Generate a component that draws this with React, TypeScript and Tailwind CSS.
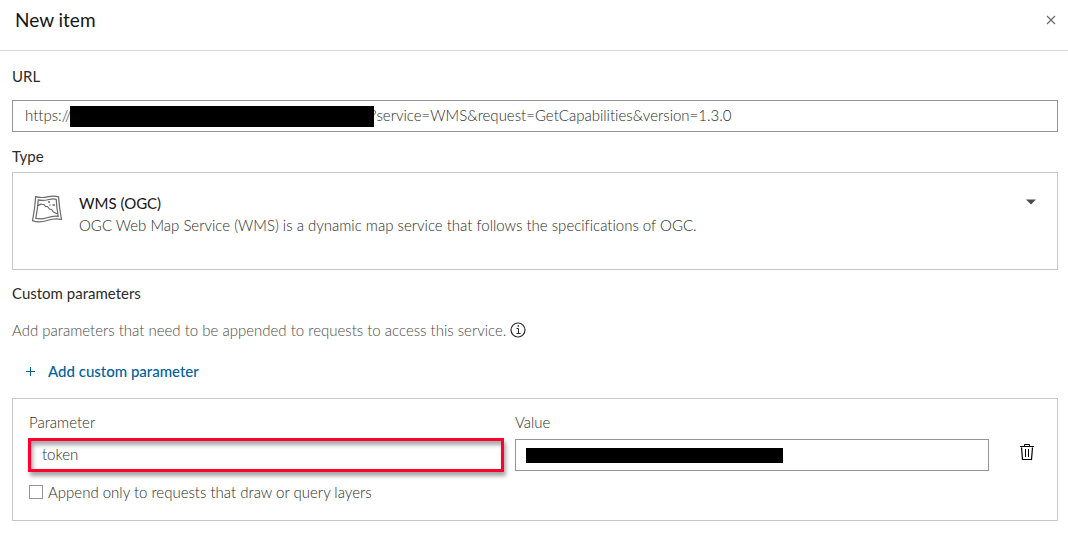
import React, { useState } from 'react';

const MapIcon = () => (
  <svg width="32" height="30" viewBox="0 0 32 30" fill="none" stroke="#6a6a6a" strokeWidth="1.2" className="mt-px shrink-0" aria-hidden="true">
    <path d="M4.600 2.700 C9 4 13.500 3.600 17.500 2.600 C21 1.900 24.500 1.900 27.600 2.900 C28 10 29 18 30.500 25.500 C26 24.300 22 24.500 17 26.300 C12 28 6 28.400 1.500 26.600 C3 18.500 4.200 10 4.600 2.700 Z" />
    <path d="M7.300 5.900 C11 6.800 14.500 6.400 18 5.500 C20.500 4.900 23 4.800 25.200 5.300 C25.500 11 26.200 17 27.200 22.300 C23.500 21.800 20 22.400 16 23.700 C12 25 8.500 25.200 4.800 24.400 C6 18 6.800 12 7.300 5.900 Z" />
    <path d="M7 11.500 C8.500 11 9.500 9.800 11 10.300 L13 10.500 L14.500 12.500 L16.500 12.500 L18.500 15 L20.500 15.500 L22.500 18 L26.500 20" />
    <path d="M17 8h2M21.500 11h2.500M18.500 11h1" strokeWidth="1.500" />
  </svg>
);

const InfoIcon = () => (
  <svg width="16" height="16" viewBox="0 0 16 16" fill="none" stroke="#2b2b2b" aria-hidden="true">
    <circle cx="8" cy="8" r="7" strokeWidth="1.200" />
    <path d="M6.500 6.500H8.500V11.500M6.500 11.500H10.500" />
    <path d="M7.500 4H9" strokeWidth="1.500" />
  </svg>
);

const TrashIcon = () => (
  <svg width="16" height="18" viewBox="0 0 16 18" fill="none" stroke="#000000" aria-hidden="true">
    <path d="M1 3.500H15M5.500 3V1.500H10.500V3" />
    <path d="M2.500 4.500L3.500 16.500H12.500L13.500 4.500" strokeWidth="1.200" />
    <path d="M6.500 6V14M9.500 6V14" />
  </svg>
);

export default function App() {
  const [query, setQuery] = useState('?service=WMS&request=GetCapabilities&version=1.3.0');
  const [param, setParam] = useState('token');
  const [value, setValue] = useState('');
  const [append, setAppend] = useState(false);

  return (
    <div className="bg-white font-['Lato',sans-serif] text-[15px] leading-5 text-[#2b2b2b] [font-variant-ligatures:none]">
      <header className="flex h-[51px] items-start justify-between border-b border-[#dcdcdc] pt-2 pr-2 pl-[15px]">
        <h1 className="text-[19px] leading-6 text-[#151515]">New item</h1>
        <button type="button" aria-label="Close" className="flex h-6 w-[18px] items-center justify-center">
          <svg width="10" height="10" viewBox="0 0 10 10" stroke="#6a6a6a" strokeWidth="1.200" aria-hidden="true">
            <path d="M1 1L9 9M9 1L1 9" />
          </svg>
        </button>
      </header>

      <main className="flex flex-col pt-[15px] pr-[10px] pb-5 pl-3">
        <label htmlFor="url">URL</label>
        <div className="mt-[14px] flex h-8 items-center border border-[#949494] pl-3 font-light text-[#2b2b2b]">
          <span className="w-[45px] shrink-0 pb-[2px] whitespace-nowrap">https://</span>
          <span className="z-10 -mr-1 h-[21px] w-[304px] shrink-0 bg-black" />
          <input id="url" type="text" value={query} onChange={(e) => setQuery(e.target.value)} className="min-w-0 flex-1 pb-[2px] outline-none" />
        </div>

        <label htmlFor="type" className="mt-[14px]">Type</label>
        <div className="mt-[6px] flex h-[98px] items-start border border-[#c8c8c8] pt-5 pr-5 pl-[18px]">
          <MapIcon />
          <div className="ml-4 flex min-w-0 flex-1 flex-col gap-[2px]">
            <select id="type" defaultValue="wms" className="appearance-none text-[#151515] outline-none">
              <option value="wms">WMS (OGC)</option>
            </select>
            <p className="font-light text-[#2b2b2b]">OGC Web Map Service (WMS) is a dynamic map service that follows the specifications of OGC.</p>
          </div>
          <svg width="12" height="6" viewBox="0 0 12 6" fill="#4a4a4a" className="mt-[6px] shrink-0" aria-hidden="true">
            <path d="M1 0.500H11L6 5.500Z" />
          </svg>
        </div>

        <h2 className="mt-[13px]">Custom parameters</h2>
        <div className="mt-[17px] flex items-center gap-1 font-light text-[#4a4a4a]">
          <p>Add parameters that need to be appended to requests to access this service.</p>
          <button type="button" aria-label="More information">
            <InfoIcon />
          </button>
        </div>

        <button type="button" className="mt-[21px] ml-[13px] flex items-center gap-3 self-start font-medium text-[#00619b]">
          <svg width="11" height="11" viewBox="0 0 11 11" stroke="currentColor" aria-hidden="true">
            <path d="M5.500 1V10M1 5.500H10" />
          </svg>
          Add custom parameter
        </button>

        <div className="mt-[17px] border border-[#c8c8c8] px-4 pt-[13px] pb-[18px] font-light text-[#2b2b2b]">
          <div className="flex items-end gap-6">
            <div className="grid flex-1 grid-cols-2 gap-3">
              <div className="flex flex-col gap-[7px]">
                <label htmlFor="parameter">Parameter</label>
                <input
                  id="parameter"
                  type="text"
                  value={param}
                  onChange={(e) => setParam(e.target.value)}
                  className="h-8 border-2 border-[#ff0030] px-[11px] pb-[2px] shadow-[0_0_0_1px_#ff0030,2px_4px_4px_1px_rgba(0,0,0,0.35),inset_2px_4px_4px_rgba(0,0,0,0.35)] outline-none"
                />
              </div>
              <div className="flex flex-col gap-[7px]">
                <label htmlFor="value">Value</label>
                <div className="flex h-8 items-center border border-[#949494] pl-[10px]">
                  <span className="h-[15px] w-[257px] shrink-0 bg-black" />
                  <input id="value" type="text" value={value} onChange={(e) => setValue(e.target.value)} className="min-w-0 flex-1 outline-none" />
                </div>
              </div>
            </div>
            <button type="button" aria-label="Delete parameter" className="mb-[10px] flex w-7 items-center justify-center">
              <TrashIcon />
            </button>
          </div>
          <label className="mt-[11px] flex items-center gap-[5px]">
            <input
              type="checkbox"
              checked={append}
              onChange={(e) => setAppend(e.target.checked)}
              className="h-[14px] w-[14px] appearance-none border border-[#949494] checked:bg-[#00619b]"
            />
            Append only to requests that draw or query layers
          </label>
        </div>
      </main>
    </div>
  );
}
